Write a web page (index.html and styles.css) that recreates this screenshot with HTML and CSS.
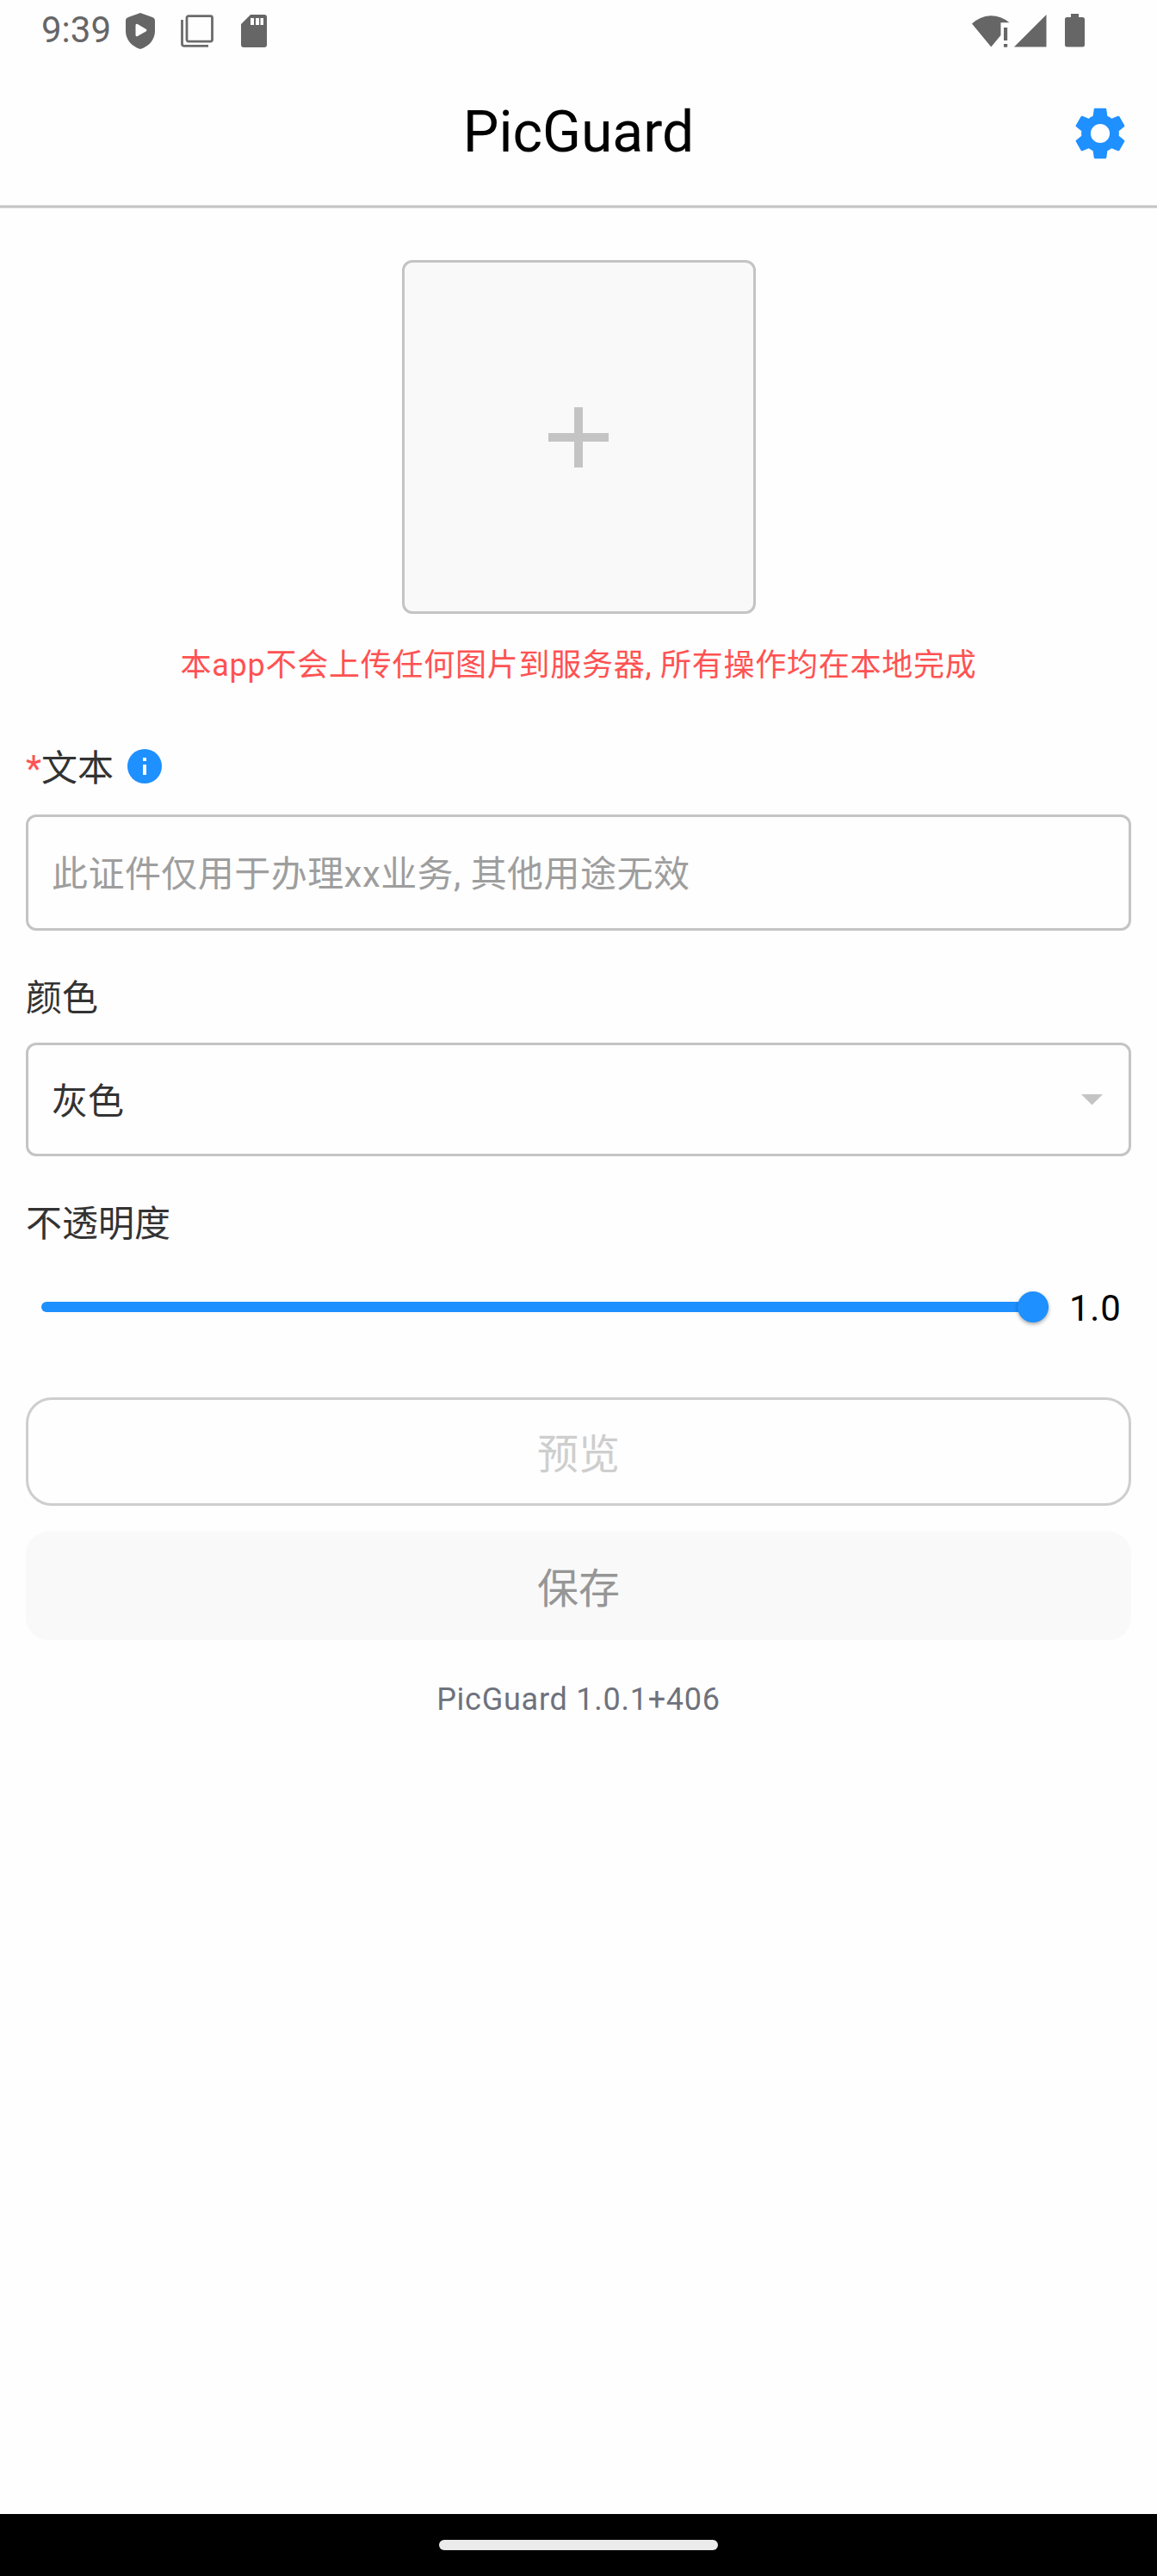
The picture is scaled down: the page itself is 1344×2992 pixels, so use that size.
FILE: index.html
```html
<!DOCTYPE html>
<html lang="zh-CN">
<head>
<meta charset="utf-8">
<title>PicGuard</title>
<link rel="stylesheet" href="styles.css">
</head>
<body>
<div class="app">
  <div class="status">
    <span class="clock">9:39</span>
    <svg class="status-icon shield" viewBox="0 0 34 42"><path fill="#666" fill-rule="evenodd" d="M17 0 3 5Q0 6 0 9V21C0 31 7 39 17 42 27 39 34 31 34 21V9Q34 6 31 5ZM11.500 14.500V25.500Q11.500 28 13.800 27L23.500 21.500Q25.500 20 23.500 18.700L13.800 13Q11.500 12 11.500 14.500Z"/></svg>
    <svg class="status-icon layers" viewBox="0 0 38 38"><g fill="none" stroke="#6b6b6b" stroke-width="2.800"><rect x="7" y="1.600" width="29.500" height="29.500" rx="2"/><path d="M1.500 6V34Q1.500 36.400 4 36.400H32"/></g></svg>
    <svg class="status-icon sd" viewBox="0 0 30 38"><path fill="#666" fill-rule="evenodd" d="M11 0H27Q30 0 30 3V35Q30 38 27 38H3Q0 38 0 35V11ZM11 4V12H15V4ZM17 4V12H21V4ZM22.500 4V12H26V4Z"/></svg>
    <svg class="status-icon wifi" viewBox="0 0 44 38"><path fill="#666" d="M0 10.500A32 32 0 0 1 43.500 9.300H33.500V24L22.300 37.500ZM37 15H41.200V30H37ZM37 34H41.200V37.700H37Z"/></svg>
    <svg class="status-icon signal" viewBox="0 0 38 38"><path fill="#666" d="M37.500 0V37.500H0Z"/></svg>
    <svg class="status-icon battery" viewBox="0 0 23 39"><path fill="#666" d="M7 0H16V4H20.500Q23 4 23 6.500V36Q23 38.500 20.500 38.500H2.500Q0 38.500 0 36V6.500Q0 4 2.500 4H7Z"/></svg>
  </div>
  <header class="header">
    <h1 class="title">PicGuard</h1>
    <svg class="gear" viewBox="0 0 24 24"><path fill="#1e90ff" d="M19.430 12.980c.04-.32.07-.64.07-.98s-.03-.66-.07-.98l2.110-1.650c.19-.15.24-.42.12-.64l-2-3.460c-.12-.22-.39-.3-.61-.22l-2.490 1c-.52-.4-1.080-.73-1.690-.98l-.38-2.650C14.460 2.180 14.250 2 14 2h-4c-.25 0-.46.18-.49.42l-.38 2.650c-.61.25-1.170.59-1.690.98l-2.490-1c-.23-.09-.49 0-.61.22l-2 3.460c-.13.22-.07.49.12.64l2.110 1.650c-.04.32-.07.65-.07.98s.03.66.07.98l-2.110 1.650c-.19.15-.24.42-.12.64l2 3.460c.12.22.39.3.61.22l2.490-1c.52.4 1.080.73 1.690.98l.38 2.650c.03.24.24.42.49.42h4c.25 0 .46-.18.49-.42l.38-2.650c.61-.25 1.170-.59 1.690-.98l2.490 1c.23.09.49 0 .61-.22l2-3.460c.12-.22.07-.49-.12-.64zM12 15.800a3.800 3.800 0 1 1 0-7.600 3.800 3.800 0 0 1 0 7.600z"/></svg>
  </header>
  <main class="content">
    <div class="upload"><svg class="plus" viewBox="0 0 70 70"><path fill="#c4c4c4" d="M30 0H40V30H70V40H40V70H30V40H0V30H30Z"/></svg></div>
    <p class="notice">本app不会上传任何图片到服务器, 所有操作均在本地完成</p>
    <div class="label label-text"><span class="required">*</span>文本<svg class="info" viewBox="0 0 40 40"><circle cx="20" cy="20" r="20" fill="#1e90ff"/><path fill="#fff" d="M18 10H22V14H18ZM18 18H22V30H18Z"/></svg></div>
    <div class="field input"><span class="field-text">此证件仅用于办理xx业务, 其他用途无效</span></div>
    <div class="label label-color">颜色</div>
    <div class="field select"><span class="field-text">灰色</span><svg class="arrow" viewBox="0 0 25 12.500"><path fill="#c4c4c4" d="M0 0H25L12.500 12.500Z"/></svg></div>
    <div class="label label-opacity">不透明度</div>
    <div class="slider-row">
      <div class="track"><div class="thumb"></div></div>
      <span class="value">1.0</span>
    </div>
    <div class="button preview">预览</div>
    <div class="button save">保存</div>
    <p class="version">PicGuard 1.0.1+406</p>
  </main>
  <div class="navbar"><div class="pill"></div></div>
</div>
</body>
</html>
```
FILE: styles.css
```css
* { box-sizing: border-box; }
body { margin: 0; background: #fefefe; font-family: Roboto, "Noto Sans CJK SC", sans-serif; }
.app { width: 1344px; height: 2992px; display: flex; flex-direction: column; background: #fefefe; }
svg { display: block; flex: none; }
.status { height: 72px; padding-left: 48px; display: flex; align-items: flex-start; color: #666; }
.clock { width: 98px; font-size: 42px; line-height: 50px; margin-top: 10px; }
.shield { width: 34px; height: 42px; margin-top: 15px; }
.layers { width: 38px; height: 38px; margin: 17px 0 0 30px; }
.sd { width: 30px; height: 38px; margin: 17px 0 0 32px; }
.wifi { width: 44px; height: 38px; margin: 17px 0 0 819px; }
.signal { width: 38px; height: 38px; margin: 17px 0 0 5px; }
.battery { width: 23px; height: 39px; margin: 16px 0 0 21px; }
.header { height: 170px; display: grid; grid-template-columns: 1fr auto 1fr; align-items: center; padding: 0 31px 4px; background: linear-gradient(#dedede 0 1px, #c4c4c4 1px 3px, #dedede 3px) bottom / 100% 4px no-repeat; }
.title { grid-column: 2; margin: 0; padding-bottom: 3px; font-size: 66px; font-weight: 400; line-height: 80px; color: #000; }
.gear { width: 70px; height: 70px; justify-self: end; }
.content { flex: 1; padding: 60px 30px 0; display: flex; flex-direction: column; align-items: stretch; }
.upload { align-self: center; width: 411px; height: 411px; border: 3px solid #c4c4c4; border-radius: 12px; background: #f9f9f9; display: flex; align-items: center; justify-content: center; }
.plus { width: 70px; height: 70px; }
.notice { margin: 33px 0 0; height: 54px; line-height: 54px; font-size: 36px; letter-spacing: .75px; color: #ff5252; text-align: center; white-space: nowrap; }
.label { height: 60px; padding-top: 4px; line-height: 56px; font-size: 42px; color: #333; display: flex; align-items: center; }
.label-text { margin-top: 61px; }
.required { color: #ff5252; }
.info { width: 40px; height: 40px; margin: 0 0 6px 16px; }
.field { border: 3px solid #c4c4c4; border-radius: 12px; padding: 0 30px 0 27px; display: flex; align-items: center; font-size: 42px; }
.field-text { padding-bottom: 4px; }
.input { height: 135px; margin-top: 25px; color: #9e9e9e; letter-spacing: .45px; }
.label-color { margin-top: 47px; }
.select { height: 132px; margin-top: 23px; color: #333; justify-content: space-between; }
.arrow { width: 25px; height: 12.5px; }
.label-opacity { margin-top: 47px; }
.slider-row { height: 60px; margin-top: 38px; padding-left: 18px; display: flex; align-items: center; }
.track { width: 1170px; height: 12px; border-radius: 6px; background: #1e90ff; display: flex; align-items: center; justify-content: flex-end; }
.thumb { width: 36px; height: 36px; border-radius: 50%; background: #1e90ff; box-shadow: 0 2px 4px rgba(0,0,0,.35); }
.value { margin-left: 24px; padding-top: 2px; font-size: 42px; letter-spacing: .75px; color: #000; }
.button { height: 126px; padding-bottom: 3px; font-size: 48px; display: flex; align-items: center; justify-content: center; }
.preview { margin-top: 75px; border: 3px solid #cecece; border-radius: 30px; color: #cecece; }
.save { margin-top: 30px; background: #f9f9f9; border-radius: 26px; color: #969696; }
.version { margin: 44px 0 0; font-size: 36px; line-height: 50px; letter-spacing: .75px; color: #6e727c; text-align: center; }
.navbar { height: 72px; background: #000; display: flex; align-items: center; justify-content: center; }
.pill { width: 324px; height: 12px; border-radius: 6px; background: #ebebeb; }
```
